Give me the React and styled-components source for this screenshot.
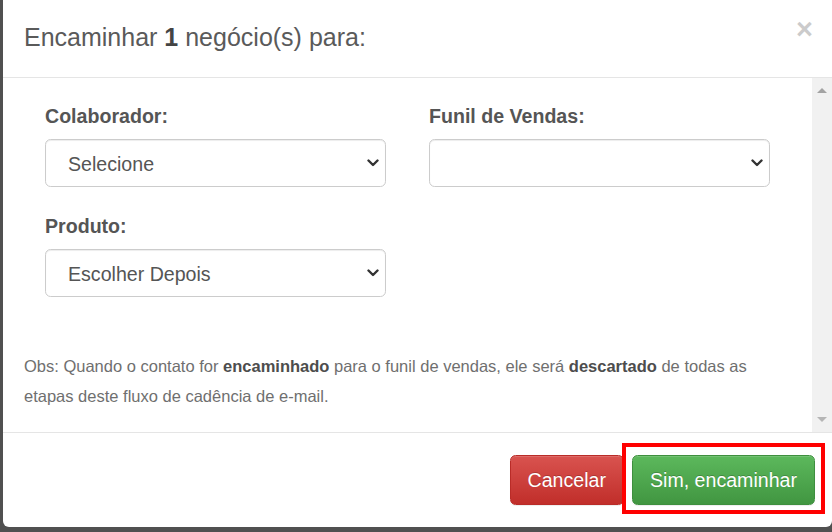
import React from 'react';
import styled, { createGlobalStyle } from 'styled-components';

const GlobalStyle = createGlobalStyle`
    html, body {
        margin: 0;
        padding: 0;
        height: 532px;
        overflow: hidden;
        background: #505050;
        font-family: "Liberation Sans", Arial, sans-serif;
    }
`

const Modal = styled.div`
    margin-left: 3px;
    width: 829px;
    height: 527px;
    background: #fff;
    border-radius: 0 0 6px 6px;
    display: flex;
    flex-direction: column;
    overflow: hidden;
`

const Header = styled.div`
    height: 78px;
    box-sizing: border-box;
    padding: 23px 19px 0 21px;
    border-bottom: 1px solid #e5e5e5;
    display: flex;
    justify-content: space-between;
    align-items: flex-start;
    flex-shrink: 0;
`

const Title = styled.h4`
    margin: 0;
    font-size: 25px;
    line-height: 28px;
    font-weight: 400;
    color: #5a5a5a;
    b {
        font-weight: 700;
        color: #444;
    }
`

const Close = styled.button`
    border: 0;
    background: none;
    padding: 0;
    margin-top: -8px;
    font-family: "Liberation Sans", Arial, sans-serif;
    font-size: 29px;
    line-height: 29px;
    font-weight: 700;
    color: #000;
    opacity: 0.2;
    cursor: pointer;
`

const Body = styled.div`
    height: 354px;
    display: flex;
    border-bottom: 1px solid #e5e5e5;
    flex-shrink: 0;
`

const Content = styled.div`
    flex: 1;
    padding: 24px 21px 21px 21px;
`

const Scrollbar = styled.div`
    width: 20px;
    background: #f1f1f1;
    display: flex;
    flex-direction: column;
    justify-content: space-between;
    align-items: center;
    padding: 10px 0;
    box-sizing: border-box;
`

const Arrow = styled.span`
    width: 0;
    height: 0;
    border-left: 5px solid transparent;
    border-right: 5px solid transparent;
    ${p => p.$up
        ? 'border-bottom: 5px solid #a3a3a3;'
        : 'border-top: 5px solid #b5b5b5;'}
`

const Grid = styled.div`
    margin-left: 21px;
    display: grid;
    grid-template-columns: 341px 341px;
    column-gap: 43px;
    row-gap: 25px;
`

const FormGroup = styled.div`
    display: flex;
    flex-direction: column;
`

const Label = styled.label`
    font-size: 19.6px;
    line-height: 28px;
    font-weight: 700;
    color: #555;
    margin-bottom: 9px;
`

const SelectWrap = styled.div`
    position: relative;
    height: 48px;
`

const Select = styled.select`
    appearance: none;
    -webkit-appearance: none;
    width: 100%;
    height: 48px;
    box-sizing: border-box;
    border: 1px solid #ccc;
    border-radius: 5.6px;
    background: #fff;
    padding: 2px 40px 0 22px;
    font-family: "Liberation Sans", Arial, sans-serif;
    font-size: 19.6px;
    color: #555;
    box-shadow: inset 0 1px 1px rgba(0,0,0,.075);
    outline: none;
`

const Chevron = styled.svg`
    position: absolute;
    right: 7px;
    top: 20px;
    pointer-events: none;
`

const Obs = styled.p`
    margin: 54px 0 0;
    font-size: 16.5px;
    line-height: 30px;
    color: #6f6f6f;
    b {
        font-weight: 700;
        color: #4d4d4d;
    }
`

const Footer = styled.div`
    flex: 1;
    padding: 22px 17px 21px;
    display: flex;
    justify-content: flex-end;
    align-items: flex-start;
    gap: 8px;
`

const Button = styled.button`
    position: relative;
    height: 50px;
    padding: 0 17px;
    border-radius: 5.6px;
    border: 1px solid ${p => p.$variant === 'danger' ? '#b92c28' : '#3e8f3e'};
    background: ${p => p.$variant === 'danger'
        ? 'linear-gradient(to bottom, #d9534f 0, #c12e2a 100%)'
        : 'linear-gradient(to bottom, #5cb85c 0, #419641 100%)'};
    color: #fff;
    font-family: "Liberation Sans", Arial, sans-serif;
    font-size: 19.6px;
    text-shadow: 0 -1px 0 rgba(0,0,0,.2);
    box-shadow: inset 0 1px 0 rgba(255,255,255,.15), 0 1px 1px rgba(0,0,0,.075);
    cursor: pointer;

    ${p => p.$highlight && `
        &::after {
            content: '';
            position: absolute;
            top: -13px;
            bottom: -10px;
            left: -11px;
            right: -11px;
            border: 4px solid #ff0000;
        }
    `}
`

const SelectField = ({ label, value }) => (
    <FormGroup>
        <Label>{label}</Label>
        <SelectWrap>
            <Select defaultValue={value || ''}>
                <option value={value || ''}>{value || ''}</option>
            </Select>
            <Chevron width="12" height="8" viewBox="0 0 12 8">
                <path d="M1.5 1.5 L6 6 L10.5 1.5" fill="none" stroke="#333" strokeWidth="2.4" strokeLinecap="round" strokeLinejoin="round" />
            </Chevron>
        </SelectWrap>
    </FormGroup>
);

const App = () => (
    <>
        <GlobalStyle />
        <Modal>
            <Header>
                <Title>Encaminhar <b>1</b> negócio(s) para:</Title>
                <Close>×</Close>
            </Header>
            <Body>
                <Content>
                    <Grid>
                        <SelectField label="Colaborador:" value="Selecione" />
                        <SelectField label="Funil de Vendas:" />
                        <SelectField label="Produto:" value="Escolher Depois" />
                    </Grid>
                    <Obs>
                        Obs: Quando o contato for <b>encaminhado</b> para o funil de vendas, ele será <b>descartado</b> de todas as etapas deste fluxo de cadência de e-mail.
                    </Obs>
                </Content>
                <Scrollbar>
                    <Arrow $up />
                    <Arrow />
                </Scrollbar>
            </Body>
            <Footer>
                <Button $variant="danger">Cancelar</Button>
                <Button $variant="success" $highlight>Sim, encaminhar</Button>
            </Footer>
        </Modal>
    </>
);

export default App;
